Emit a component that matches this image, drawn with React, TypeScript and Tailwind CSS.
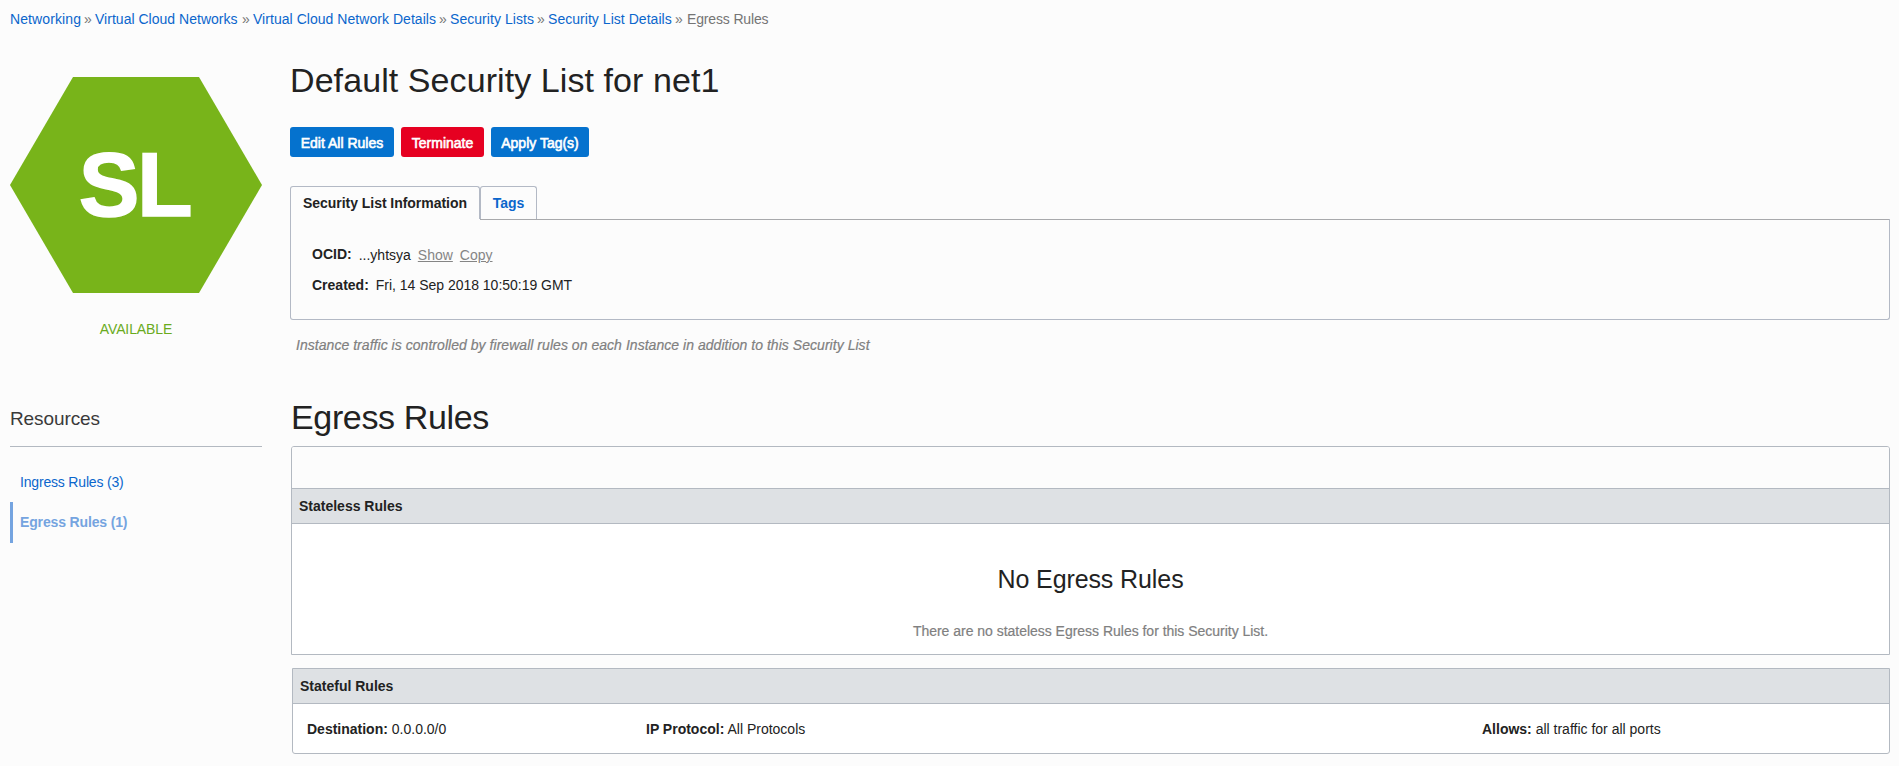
import React from 'react';

const crumbs = [
  { label: 'Networking', className: 'w-[71px] tracking-[0.1px]' },
  { label: 'Virtual Cloud Networks', className: 'w-[144px] tracking-[0.02px]' },
  { label: 'Virtual Cloud Network Details', className: 'w-[183px] tracking-[0.04px]' },
  { label: 'Security Lists', className: 'w-[84px] tracking-[0.05px]' },
  { label: 'Security List Details', className: 'w-[124px] tracking-[0.04px]' },
];

function Breadcrumbs() {
  return (
    <nav className="flex h-5 whitespace-pre text-[#757575]">
      {crumbs.map((c) => (
        <React.Fragment key={c.label}>
          <a className={`text-[#0b66cc] ${c.className}`}>{c.label}</a>
          <span className="w-[14px] pl-[3px]">»</span>
        </React.Fragment>
      ))}
      <span className="pl-px tracking-[-0.15px]">Egress Rules</span>
    </nav>
  );
}

function Sidebar() {
  return (
    <aside className="w-[252px] shrink-0">
      <svg className="mt-[48px] block" width="252" height="216" viewBox="0 0 252 216">
        <polygon points="63,0 189,0 252,108 189,216 63,216 0,108" fill="#78b41a" />
        <text
          x="124.5"
          y="138.5"
          textAnchor="middle"
          fill="#fff"
          stroke="#fff"
          strokeWidth="1.5"
          className="text-[91px] font-bold tracking-[-2.5px]"
        >
          SL
        </text>
      </svg>
      <div className="mt-[26px] text-center tracking-[-0.1px] text-[#6aab1c]">AVAILABLE</div>
      <h2 className="mt-[65px] h-[43px] border-b border-[#b3b9c1] text-[19px] leading-[30px] tracking-[-0.1px] text-[#3a3a3a]">
        Resources
      </h2>
      <ul className="mt-[15px]">
        <li className="h-[40px] pl-[10px] leading-[40px] tracking-[-0.18px] text-[#0b66cc]">Ingress Rules (3)</li>
        <li className="h-[41px] border-l-[3px] border-[#75a4e0] pl-[7px] font-bold leading-[41px] tracking-[-0.15px] text-[#75a4e0]">
          Egress Rules (1)
        </li>
      </ul>
    </aside>
  );
}

function Button({ label, className }: { label: string; className: string }) {
  return (
    <button
      className={`h-[30px] rounded-[3px] text-center leading-[32px] text-white [-webkit-text-stroke:0.6px_#fff] ${className}`}
    >
      {label}
    </button>
  );
}

function InfoPanel() {
  return (
    <section className="mt-[29px]">
      <div className="flex h-[33px] font-bold">
        <div className="w-[190px] rounded-t-[3px] border border-b-0 border-[#b3b9c5] pl-3 leading-[33px] tracking-[-0.04px]">
          Security List Information
        </div>
        <div className="w-[57px] rounded-t-[3px] border border-b-0 border-[#b3b9c5] text-center leading-[33px] text-[#0b66cc]">
          Tags
        </div>
      </div>
      <div className="flex h-[101px] flex-col rounded-b-[3px] border border-t-0 border-[#b3b9c5]">
        <div className="ml-[189px] h-px shrink-0 bg-[#a8a9ac]" />
        <div className="mt-[24px] flex pl-[21px]">
          <b>OCID:</b>
          <span className="ml-[7px] mt-px">...yhtsya</span>
          <a className="ml-[7px] mt-px text-[#858585] underline">Show</a>
          <a className="ml-[7px] mt-px text-[#858585] underline">Copy</a>
        </div>
        <div className="mt-[10px] flex pl-[21px]">
          <b>Created:</b>
          <span className="ml-[7px] tracking-[-0.02px]">Fri, 14 Sep 2018 10:50:19 GMT</span>
        </div>
      </div>
    </section>
  );
}

export default function App() {
  return (
    <div className="h-[766px] w-[1899px] overflow-hidden bg-[#fcfcfc] pl-[10px] pr-[9px] pt-[9px] font-['Liberation_Sans',Arial,sans-serif] text-[14px] leading-5 text-[#222]">
      <Breadcrumbs />
      <div className="flex">
        <Sidebar />
        <main className="ml-[28px] min-w-0 flex-1">
          <h1 className="mt-[31px] h-[40px] text-[34px] leading-[40px] tracking-[0.08px]">
            Default Security List for net1
          </h1>
          <div className="mt-[27px] flex gap-[7px]">
            <Button label="Edit All Rules" className="w-[104px] bg-[#0572ce]" />
            <Button label="Terminate" className="w-[83px] bg-[#e60021]" />
            <Button label="Apply Tag(s)" className="w-[98px] bg-[#0572ce]" />
          </div>
          <InfoPanel />
          <p className="mt-[15px] pl-[6px] italic tracking-[0.04px] text-[#808080] [-webkit-text-stroke:0.2px_#808080]">
            Instance traffic is controlled by firewall rules on each Instance in addition to this Security List
          </p>
          <h1 className="mt-[42px] h-[49px] pl-px text-[34px] leading-[40px] tracking-[-0.35px]">Egress Rules</h1>
          <section className="ml-px h-[209px] rounded-t-[3px] border border-[#b3b9c1] bg-white">
            <div className="h-[41px] rounded-t-[2px] bg-[#fcfcfc]" />
            <div className="h-[36px] border-y border-[#b3b9c1] bg-[#dee1e4] pl-[7px] font-bold leading-[34px]">
              Stateless Rules
            </div>
            <div className="pt-[40px] text-center text-[25px] leading-[30px] tracking-[-0.1px]">No Egress Rules</div>
            <div className="mt-[27px] text-center tracking-[-0.02px] text-[#808080] [-webkit-text-stroke:0.2px_#808080]">
              There are no stateless Egress Rules for this Security List.
            </div>
          </section>
          <section className="ml-[2px] mt-[13px] h-[86px] rounded-b-[3px] border border-[#b3b9c1] bg-white">
            <div className="h-[35px] border-b border-[#b3b9c1] bg-[#dee1e4] pl-[7px] font-bold leading-[34px]">
              Stateful Rules
            </div>
            <div className="flex pl-[14px] pt-[15px]">
              <span className="w-[339px]">
                <b>Destination:</b> 0.0.0.0/0
              </span>
              <span className="w-[836px]">
                <b>IP Protocol:</b> All Protocols
              </span>
              <span>
                <b>Allows:</b> all traffic for all ports
              </span>
            </div>
          </section>
        </main>
      </div>
    </div>
  );
}
